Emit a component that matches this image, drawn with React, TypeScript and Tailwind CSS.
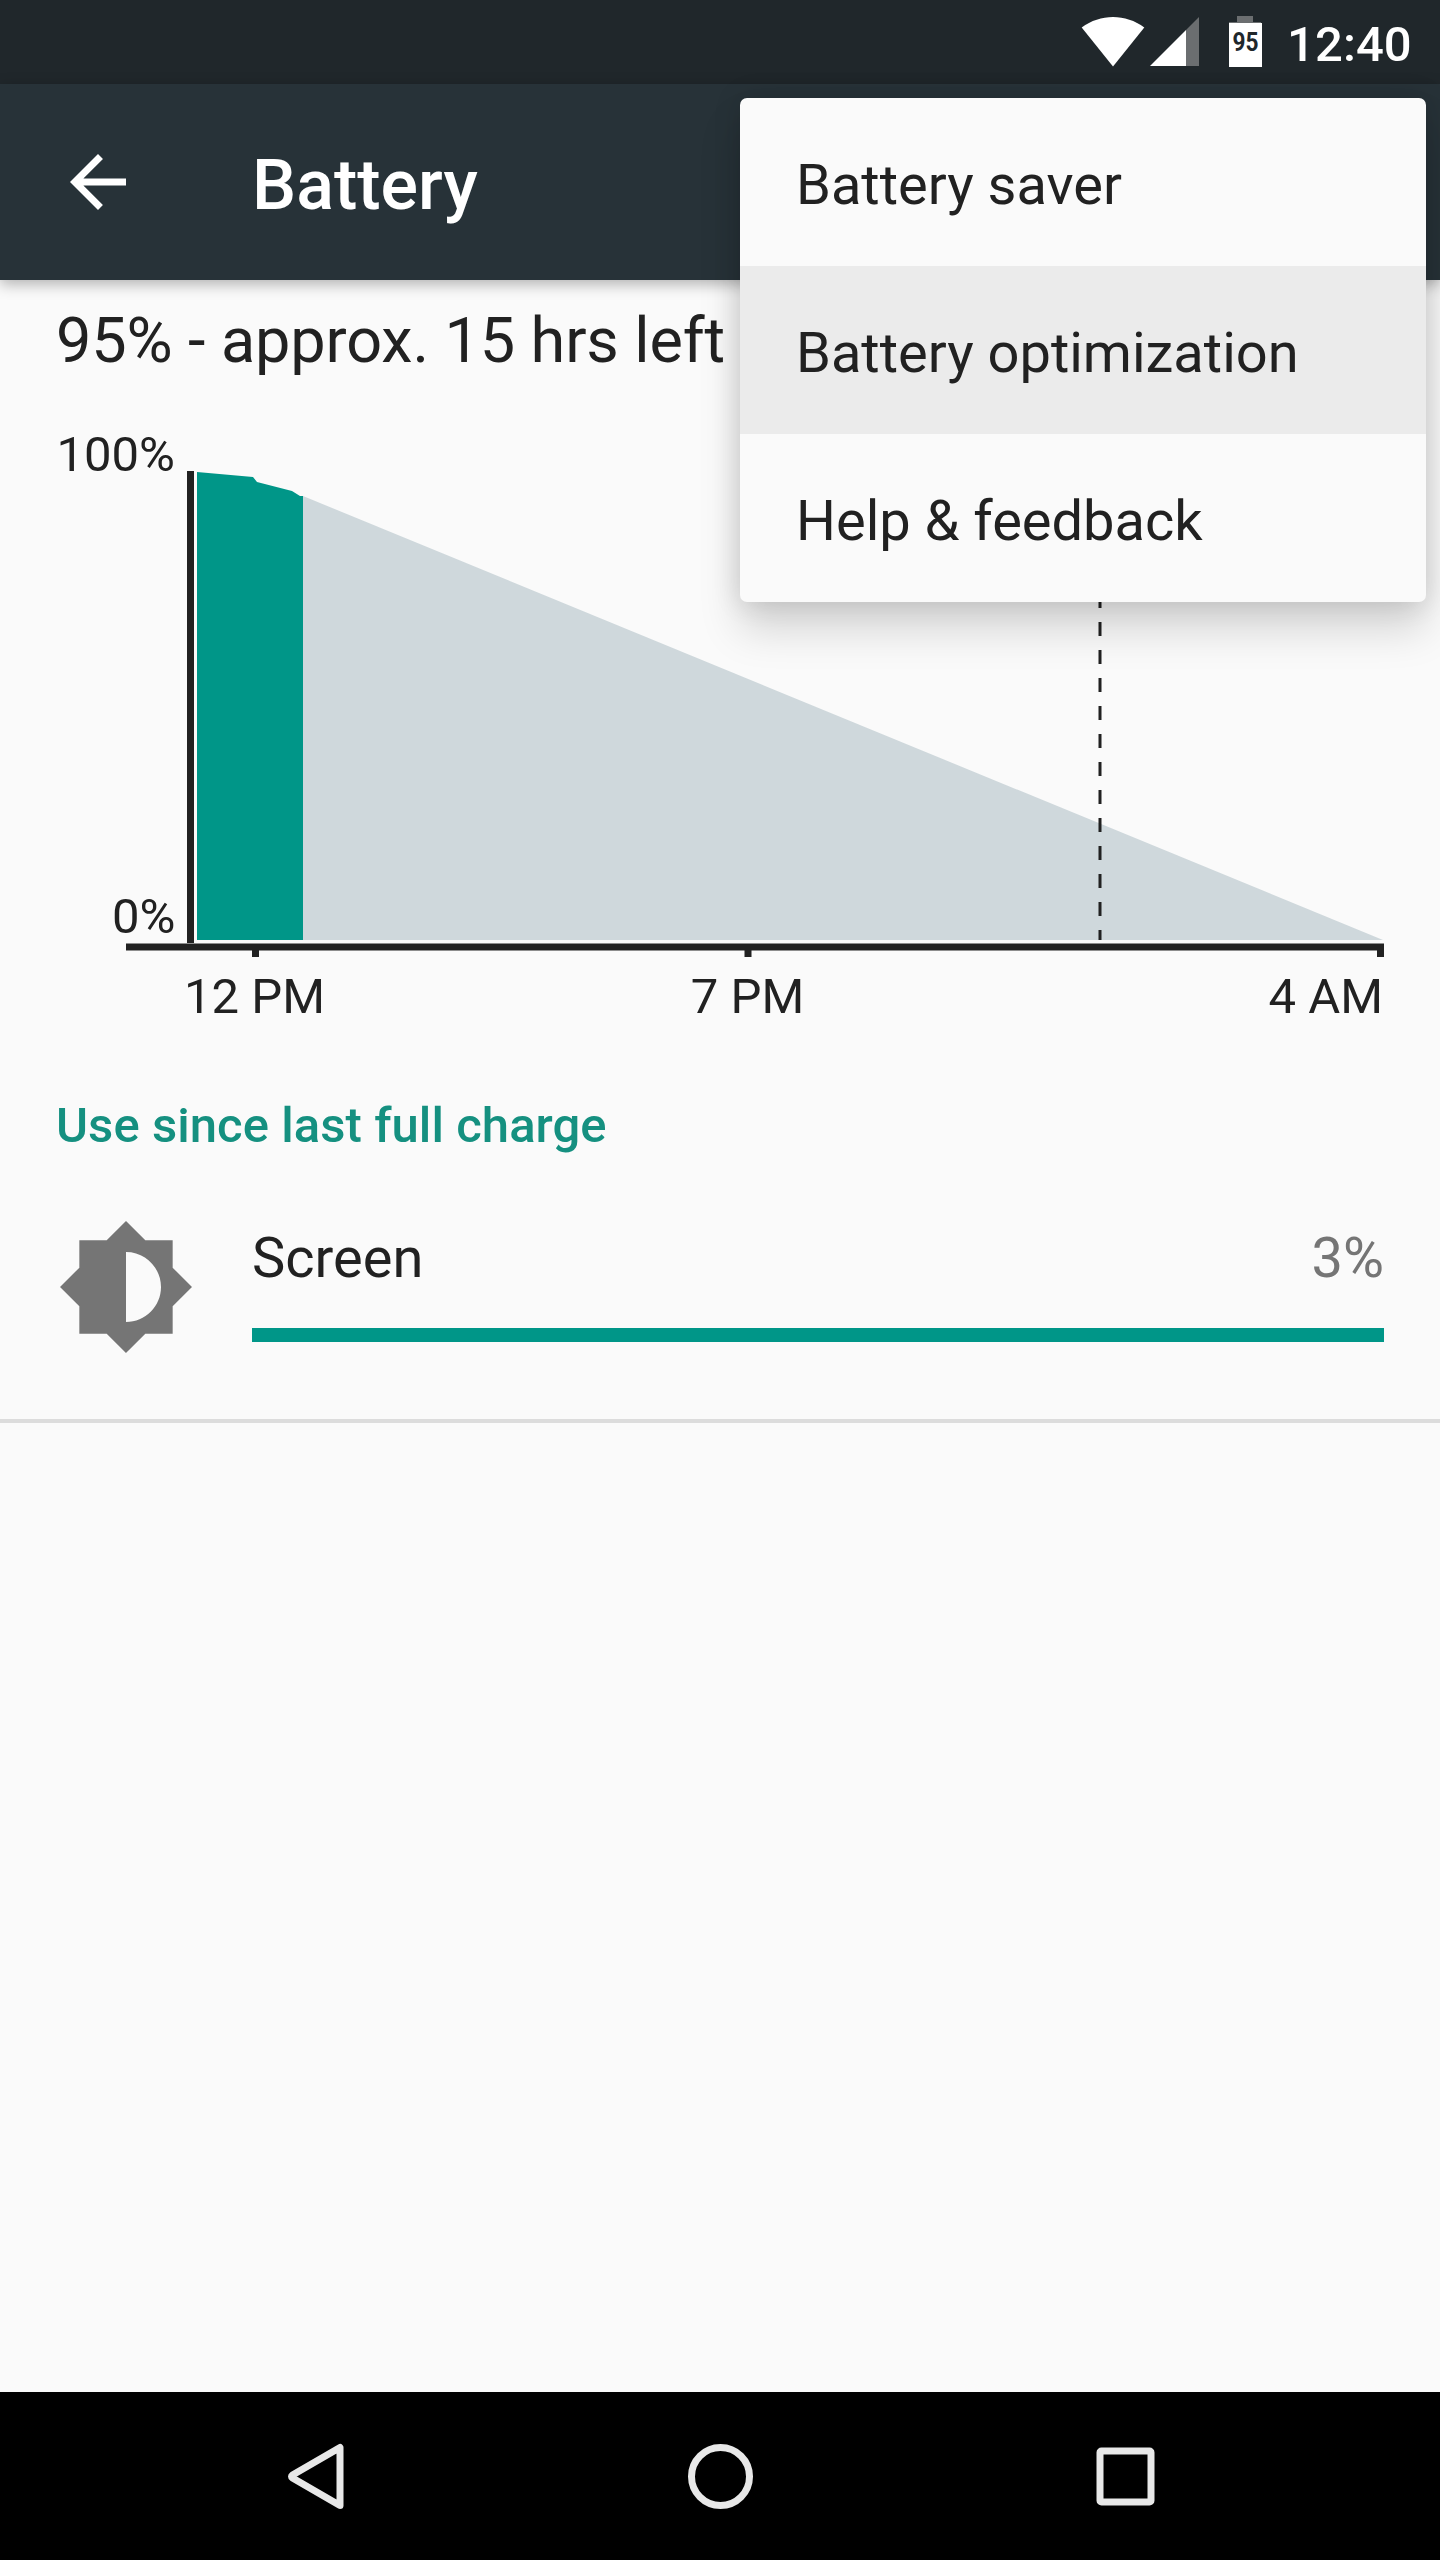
const MENU_ITEMS = [
  { label: 'Battery saver', active: false },
  { label: 'Battery optimization', active: true },
  { label: 'Help & feedback', active: false },
]

const USAGE = [{ name: 'Screen', percent: '3%', fill: 100 }]

function StatusBar() {
  return (
    <div className="flex h-[84px] shrink-0 items-start justify-end bg-[#20272b] pr-[28px] text-white">
      <svg className="mt-[16px] h-[51px] w-[64px]" viewBox="0 0 64 51" fill="#fff">
        <path d="M.7 11.5C10 4.500 21 1 32 1s22 3.500 31.300 10.500L32 50.500z" />
      </svg>
      <svg className="mt-[16px] ml-[5px] h-[51px] w-[50px]" viewBox="0 0 50 51" fill="#fff">
        <path d="M49 1v49H36V14z" fill="#6b6e70" />
        <path d="M36 14v36H0z" />
      </svg>
      <svg className="mt-[16px] ml-[28px] h-[51px] w-[34px]" viewBox="0 0 34 51">
        <path d="M9 0h16v6h8v2H1V6h8z" fill="#6b6e70" />
        <path d="M1 7h33v44H1z" fill="#fff" />
        <text x="17.500" y="35" textAnchor="middle" textLength="26" lengthAdjust="spacingAndGlyphs" fontFamily="Roboto" fontWeight="700" fontSize="26" fill="#20272b">
          95
        </text>
      </svg>
      <span className="ml-[25px] w-[125px] text-[49px] leading-[89px] font-medium tracking-[0.1px]">12:40</span>
    </div>
  )
}

function Toolbar() {
  return (
    <header className="relative flex h-[196px] shrink-0 items-center bg-[#273238] pl-[56px] text-white shadow-[0_4px_14px_rgba(0,0,0,0.3)]">
      <svg className="h-[84px] w-[84px]" viewBox="0 0 24 24" fill="#fff">
        <path d="M20 11H7.830l5.590-5.590L12 4l-8 8 8 8 1.410-1.410L7.830 13H20v-2z" />
      </svg>
      <h1 className="ml-[112px] pt-[6px] text-[70px] leading-[84px] font-medium">Battery</h1>
    </header>
  )
}

function BatteryChart() {
  return (
    <svg className="block h-[640px] w-full" viewBox="0 400 1440 640" fontFamily="Roboto" fontSize="49" fill="#212121">
      {/* projected drain, then measured level */}
      <path d="M303 496L1383 940H303z" fill="#cfd8dc" />
      <path d="M197 472l56 5 4 5 35 9 8 5h3v444H197z" fill="#009688" />
      <path d="M1100 482V940" stroke="#212121" strokeWidth="3" strokeDasharray="14 14" />

      <path d="M187 471h7v472h-7z" />
      <path d="M126 943.500h1258v7H126z" />
      <path d="M252 950h7v7h-7zM744.500 950h7v7h-7zM1377 950h7v7h-7z" />

      <text x="175" y="471" textAnchor="end">100%</text>
      <text x="175.500" y="933" textAnchor="end">0%</text>
      <text x="254.500" y="1013" textAnchor="middle">12 PM</text>
      <text x="747.500" y="1013" textAnchor="middle">7 PM</text>
      <text x="1383" y="1013" textAnchor="end">4 AM</text>
    </svg>
  )
}

function OverflowMenu() {
  return (
    <ul className="absolute top-[98px] right-[14px] w-[686px] overflow-hidden rounded-[7px] bg-[#fafafa] shadow-[0_28px_42px_rgba(0,0,0,0.15),0_0_28px_rgba(0,0,0,0.14)]">
      {MENU_ITEMS.map((item) => (
        <li
          key={item.label}
          className={`flex h-[168px] items-center px-[56px] pt-[5px] text-[56px] ${item.active ? 'bg-[#ebebeb]' : ''}`}
        >
          {item.label}
        </li>
      ))}
    </ul>
  )
}

function NavigationBar() {
  return (
    <nav className="flex h-[168px] shrink-0 items-center justify-between bg-black px-[273px]">
      <svg className="h-[84px] w-[84px]" viewBox="0 0 84 84" fill="none" stroke="#e8e8e8" strokeWidth="7" strokeLinejoin="round">
        <path d="M67 13.500v58L19.500 44q-2-1.500 0-3z" />
      </svg>
      <svg className="h-[84px] w-[84px]" viewBox="0 0 84 84" fill="none" stroke="#e8e8e8" strokeWidth="7">
        <circle cx="42.500" cy="42.500" r="29" />
      </svg>
      <svg className="h-[84px] w-[84px]" viewBox="0 0 84 84" fill="none" stroke="#e8e8e8" strokeWidth="7">
        <rect x="17" y="17" width="51" height="51" rx="1.500" />
      </svg>
    </nav>
  )
}

export default function App() {
  return (
    <div className="relative flex h-[2560px] w-[1440px] flex-col overflow-hidden bg-[#fafafa] font-['Roboto',sans-serif] text-[#212121]">
      <StatusBar />
      <Toolbar />

      <main className="flex flex-1 flex-col">
        <h2 className="h-[120px] pt-[19px] pl-[56px] text-[63px] leading-[84px] tracking-[-0.12px]">
          95% - approx. 15 hrs left
        </h2>
        <BatteryChart />

        <h3 className="mt-[51px] pl-[56px] text-[49px] leading-[70px] font-medium tracking-[0.06px] text-[#159080]">
          Use since last full charge
        </h3>

        {USAGE.map((item) => (
          <div key={item.name} className="mt-[56px] flex h-[206px] border-b-4 border-[#dcdcdc] pr-[56px] pl-[56px]">
            <svg className="h-[140px] w-[140px]" viewBox="0 0 24 24" fill="#757575">
              <path d="M20 15.310L23.310 12 20 8.690V4h-4.690L12 .690 8.690 4H4v4.690L.690 12 4 15.310V20h4.690L12 23.310 15.310 20H20v-4.690zM12 18V6c3.310 0 6 2.690 6 6s-2.690 6-6 6z" />
            </svg>
            <div className="ml-[56px] flex-1">
              <div className="flex justify-between pt-[7px] text-[56px] leading-[68px]">
                <span>{item.name}</span>
                <span className="text-[#757575]">{item.percent}</span>
              </div>
              <div className="mt-[36px] h-[14px]">
                <div className="h-full bg-[#009688]" style={{ width: `${item.fill}%` }} />
              </div>
            </div>
          </div>
        ))}
      </main>

      <NavigationBar />
      <OverflowMenu />
    </div>
  )
}
